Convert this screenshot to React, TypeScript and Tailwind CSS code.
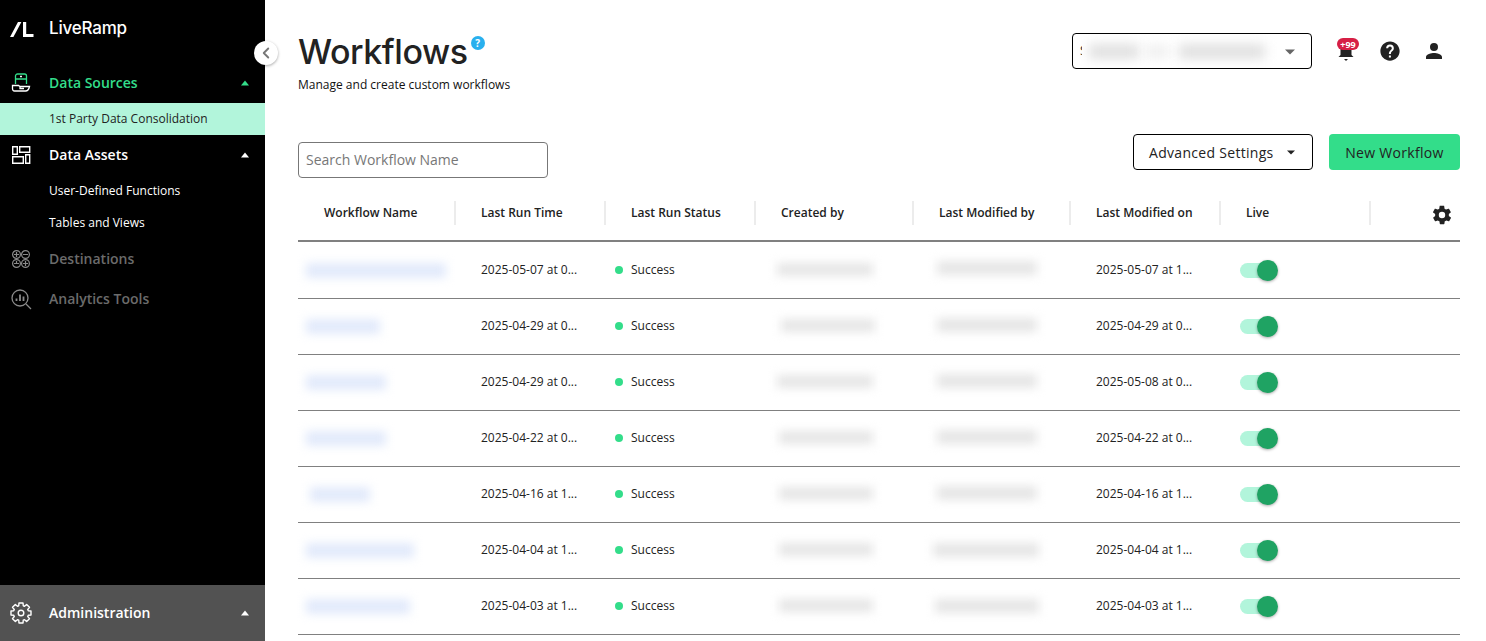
import { ChevronLeft } from 'lucide-react';

const rows = [
    { run: '2025-05-07 at 0...', mod: '2025-05-07 at 1...', name: 'w-[140px] ml-[8px]', by: 'w-[96px] ml-[23px]', last: 'w-[100px] ml-[25px] -mt-[4px]' },
    { run: '2025-04-29 at 0...', mod: '2025-04-29 at 0...', name: 'w-[74px] ml-[8px]', by: 'w-[94px] ml-[27px]', last: 'w-[100px] ml-[25px] -mt-[2px]' },
    { run: '2025-04-29 at 0...', mod: '2025-05-08 at 0...', name: 'w-[80px] ml-[8px]', by: 'w-[96px] ml-[23px]', last: 'w-[100px] ml-[25px] -mt-[2px]' },
    { run: '2025-04-22 at 0...', mod: '2025-04-22 at 0...', name: 'w-[80px] ml-[8px]', by: 'w-[94px] ml-[25px]', last: 'w-[100px] ml-[25px] -mt-[2px]' },
    { run: '2025-04-16 at 1...', mod: '2025-04-16 at 1...', name: 'w-[60px] ml-[12px]', by: 'w-[94px] ml-[25px]', last: 'w-[100px] ml-[25px] -mt-[2px]' },
    { run: '2025-04-04 at 1...', mod: '2025-04-04 at 1...', name: 'w-[108px] ml-[8px]', by: 'w-[94px] ml-[25px]', last: 'w-[106px] ml-[21px]' },
    { run: '2025-04-03 at 1...', mod: '2025-04-03 at 1...', name: 'w-[104px] ml-[8px]', by: 'w-[94px] ml-[25px]', last: 'w-[104px] ml-[23px]' },
];

const columns = 'grid grid-cols-[156px_150px_150px_158px_157px_150px_150px_91px]';

// eight square teeth around a ring
const cogPath = Array.from({ length: 8 }, (_, i) => {
    const a = (i * Math.PI) / 4;
    const pt = (r: number, d: number) => `${(11 + r * Math.sin(a + d)).toFixed(2)} ${(11 - r * Math.cos(a + d)).toFixed(2)}`;
    return `${i === 0 ? 'M' : 'L'}${pt(7.6, -0.3)} L${pt(10.2, -0.2)} L${pt(10.2, 0.2)} L${pt(7.6, 0.3)}`;
}).join(' ') + ' Z';

function Caret() {
    return (
        <svg width="10" height="6" viewBox="0 0 10 6">
            <path d="M5 0.5 9 5.5H1Z" fill="currentColor" />
        </svg>
    );
}

function NavHeader({ label, className, caret, icon }: { label: string; className: string; caret?: boolean; icon: React.ReactNode }) {
    return (
        <div className={`flex h-10 items-center pl-[10px] pr-[15px] ${className}`}>
            <div className="flex w-[39px] shrink-0">{icon}</div>
            <span className="-mt-[2px] flex-1 text-[14px] font-semibold">{label}</span>
            {caret && <Caret />}
        </div>
    );
}

function TableHeader({ label, first }: { label: string; first?: boolean }) {
    return (
        <div className={`flex h-[24px] items-center text-[12px] font-semibold text-[#222] ${first ? 'pl-[26px]' : 'border-l-2 border-[#ececec] pl-[25px]'}`}>
            {label}
        </div>
    );
}

function Toggle() {
    return (
        <div className="ml-[21px] mt-[2px] flex h-[20px] w-[38px] items-center">
            <div className="relative h-[15px] w-[36px] rounded-full bg-[#b2f5db]">
                <div className="absolute -right-[2px] -top-[3px] h-[21px] w-[21px] rounded-full bg-[#1fa363] shadow-[0_1px_3px_rgba(0,0,0,0.35)]" />
            </div>
        </div>
    );
}

export default function App() {
    return (
        <div className="flex h-screen overflow-hidden bg-white font-['Open_Sans',sans-serif] text-[#222]">
            <aside className="relative flex w-[265px] shrink-0 flex-col bg-black text-white">
                <div className="flex h-[63px] items-start pl-[10px] pt-[17px]">
                    <svg width="24" height="22" viewBox="0 0 24 22" className="mr-[15px]">
                        <path d="M0 20 8 5h3.400L3.400 20Z" fill="#fff" />
                        <path d="M13 5h3.200v12H23.500v3H13Z" fill="#fff" />
                    </svg>
                    <span className="font-['Inter',sans-serif] text-[17px] font-medium leading-[22px] tracking-[-0.2px]">LiveRamp</span>
                </div>

                <NavHeader
                    label="Data Sources"
                    className="text-[#33dd8a]"
                    caret
                    icon={
                        <svg width="22" height="22" viewBox="0 0 22 22" fill="none" strokeWidth="1.300">
                            <path d="M5.500 12V4a2 2 0 0 1 2-2h7a2 2 0 0 1 2 2v8M5.500 7h11" stroke="#33dd8a" />
                            <path d="M10 4.500h2" stroke="#fff" />
                            <path d="M2.500 13.500h6l1.500 1h9.500c-.5 2.500-2 4.500-4 4.500H4.500c-1.300 0-2-1-2-2.500ZM10 14.500v2h4" stroke="#fff" />
                        </svg>
                    }
                />
                <div className="flex h-8 items-center bg-[#b2f5db] pl-[49px] text-[12px] text-[#222]">1st Party Data Consolidation</div>

                <NavHeader
                    label="Data Assets"
                    caret
                    icon={
                        <svg width="22" height="22" viewBox="0 0 22 22" fill="none" stroke="#fff" strokeWidth="1.400">
                            <path d="M2.700 2.700h4.600v7.600H2.700Z" />
                            <path d="M9.700 2.700h10v5.600h-10Z" />
                            <path d="M2.700 12.700h10.600v6.600H2.700Z" />
                            <path d="M15.700 10.700h4v8.600h-4Z" />
                        </svg>
                    }
                />
                <div className="flex h-8 items-center pl-[49px] text-[12px]">User-Defined Functions</div>
                <div className="flex h-8 items-center pl-[49px] text-[12px]">Tables and Views</div>

                <NavHeader
                    label="Destinations"
                    className="text-[#6b6b6b]"
                    icon={
                        <svg width="22" height="22" viewBox="0 0 22 22" fill="none" stroke="#8a8a8a" strokeWidth="1.200">
                            <circle cx="6.500" cy="6.500" r="3.900" />
                            <circle cx="15.500" cy="6.500" r="3.900" />
                            <circle cx="6.500" cy="15.500" r="3.900" />
                            <circle cx="15.500" cy="15.500" r="3.900" />
                            <path d="M6.500 4v5M4 6.500h5M13 6.500h5M15.500 13v5M6.500 13v3M4 15.500h5M13 15.500h5" />
                        </svg>
                    }
                />
                <NavHeader
                    label="Analytics Tools"
                    className="text-[#6b6b6b]"
                    icon={
                        <svg width="22" height="22" viewBox="0 0 22 22" fill="none" stroke="#8a8a8a" strokeWidth="1.300">
                            <circle cx="10" cy="10" r="8" />
                            <path d="M6.500 13v-2.500M10 13V6.500M13.500 13V8.500" strokeWidth="1.800" />
                            <path d="M16 16l5 5" />
                        </svg>
                    }
                />

                <div className="mt-auto flex h-[56px] items-center bg-[#525252] pl-[10px] pr-[15px]">
                    <div className="flex w-[39px] shrink-0">
                        <svg width="22" height="22" viewBox="0 0 22 22" fill="none" stroke="#fff" strokeWidth="1.400" strokeLinejoin="round">
                            <path d={cogPath} />
                            <circle cx="11" cy="11" r="2.800" />
                        </svg>
                    </div>
                    <span className="-mt-[2px] flex-1 text-[14px] font-semibold">Administration</span>
                    <Caret />
                </div>

                <button className="absolute left-[254px] top-[41px] flex h-6 w-6 items-center justify-center rounded-full bg-white shadow-[0_1px_3px_rgba(0,0,0,0.35)]">
                    <ChevronLeft size={18} strokeWidth={2.500} className="text-[#777]" />
                </button>
            </aside>

            <main className="flex min-w-0 flex-1 flex-col pl-[33px] pr-[26px]">
                <header className="flex h-[134px] shrink-0 items-start justify-between pt-[33px]">
                    <div>
                        <div className="flex items-start">
                            <h1 className="font-['Inter',sans-serif] text-[34px] font-medium leading-[38px] tracking-[-0.45px] text-[#222]">Workflows</h1>
                            <div className="ml-[3px] mt-[3px] flex h-[14px] w-[14px] items-center justify-center rounded-full bg-[#29b0ee] text-[10px] font-bold leading-none text-white">?</div>
                        </div>
                        <p className="mt-[5px] text-[12px] leading-[18px] text-[#111]">Manage and create custom workflows</p>
                    </div>
                    <div className="flex items-center">
                        <div className="relative flex h-9 w-[240px] items-center overflow-hidden rounded-[4px] border border-black pl-[7px]">
                            <span className="text-[13px]">S</span>
                            <div className="absolute left-[9px] top-[7px] h-[22px] w-[194px] bg-white" />
                            <div className="absolute left-[16px] top-[10px] h-[15px] w-[50px] bg-[#e0e0e0] blur-[6px]" />
                            <div className="absolute left-[72px] top-[11px] h-[13px] w-[24px] bg-[#efefef] blur-[6px]" />
                            <div className="absolute left-[106px] top-[10px] h-[15px] w-[86px] bg-[#e0e0e0] blur-[6px]" />
                            <svg width="12" height="6" viewBox="0 0 12 6" className="absolute right-[15px] top-[15px]">
                                <path d="M1 .5h10L6 5.500Z" fill="#666" />
                            </svg>
                        </div>
                        <div className="relative ml-[22px] flex h-6 w-6 items-center justify-center">
                            <svg width="18" height="22" viewBox="0 0 18 22" className="mt-[1px]">
                                <path d="M9 2c3.500 0 5.500 2.500 5.500 6v6l2 2H1.500l2-2V8C3.500 4.500 5.500 2 9 2ZM7 18h4l-2 2Z" fill="#222" />
                            </svg>
                            <div className="absolute -top-px left-[3px] flex h-3 w-[22px] items-center justify-center rounded-full bg-[#d61f45] text-[9px] font-bold leading-none text-white">+99</div>
                        </div>
                        <svg width="22" height="22" viewBox="0 0 24 24" className="ml-[21px]">
                            <path d="M12 1.500C6.200 1.500 1.500 6.200 1.500 12S6.200 22.500 12 22.500 22.500 17.800 22.500 12 17.800 1.500 12 1.500Zm1 17.500h-2.200v-2.200H13Zm2.300-7.600-1 1c-.8.800-1.300 1.400-1.300 3h-2.200v-.6c0-1.200.5-2.200 1.300-3l1.300-1.400c.4-.4.600-.9.600-1.400a2 2 0 0 0-4 0H7.800a4.200 4.200 0 0 1 8.400 0c0 .9-.4 1.800-.9 2.400Z" fill="#222" />
                        </svg>
                        <svg width="24" height="24" viewBox="0 0 24 24" className="ml-[21px] mr-[14px]">
                            <path d="M12 12a4 4 0 1 0 0-8 4 4 0 0 0 0 8Zm0 2c-2.700 0-8 1.300-8 4v2h16v-2c0-2.700-5.300-4-8-4Z" fill="#222" />
                        </svg>
                    </div>
                </header>

                <div className="flex shrink-0 items-start justify-between">
                    <div className="mt-2 flex h-9 w-[250px] items-center rounded-[4px] border border-[#777] pb-[2px] pl-[7px] text-[14px] text-[#777]">Search Workflow Name</div>
                    <div className="flex items-center gap-4">
                        <div className="flex h-9 w-[180px] items-center rounded-[4px] border border-black pl-[15px] text-[14px] font-medium tracking-[0.3px] text-[#222]">
                            Advanced Settings
                            <svg width="8" height="5" viewBox="0 0 8 5" className="ml-[13px]">
                                <path d="M0 .5h8L4 4.500Z" fill="#222" />
                            </svg>
                        </div>
                        <div className="flex h-9 w-[131px] items-center justify-center rounded-[4px] bg-[#33dd8a] text-[14px] font-medium tracking-[0.3px] text-[#222]">New Workflow</div>
                    </div>
                </div>

                <div className={`${columns} mt-[23px] h-[41px] shrink-0 items-start border-b-2 border-[#808080]`}>
                    <TableHeader label="Workflow Name" first />
                    <TableHeader label="Last Run Time" />
                    <TableHeader label="Last Run Status" />
                    <TableHeader label="Created by" />
                    <TableHeader label="Last Modified by" />
                    <TableHeader label="Last Modified on" />
                    <TableHeader label="Live" />
                    <div className="flex h-[24px] items-center justify-end border-l-2 border-[#ececec] pr-[7px]">
                        <svg width="22" height="22" viewBox="0 0 24 24" className="mt-[4px]">
                            <path d="M19.400 13c.1-.3.1-.7.1-1s0-.7-.1-1l2.100-1.600c.2-.2.2-.4.1-.6l-2-3.500c-.1-.2-.4-.3-.6-.2l-2.500 1a7.400 7.400 0 0 0-1.700-1l-.4-2.700c0-.2-.2-.4-.5-.4h-4c-.3 0-.5.200-.5.400l-.4 2.700c-.6.200-1.200.6-1.700 1l-2.500-1c-.2-.1-.5 0-.6.200l-2 3.500c-.1.200-.1.400.1.600L4.600 11c-.1.300-.1.700-.1 1s0 .7.1 1l-2.100 1.600c-.2.200-.2.400-.1.600l2 3.500c.1.200.4.300.6.200l2.500-1c.5.400 1.100.8 1.700 1l.4 2.700c0 .2.200.4.500.4h4c.3 0 .5-.2.500-.4l.4-2.700c.6-.2 1.200-.6 1.700-1l2.500 1c.2.100.5 0 .6-.2l2-3.500c.1-.2.100-.4-.1-.6ZM12 15.500a3.500 3.500 0 1 1 0-7 3.500 3.500 0 0 1 0 7Z" fill="#222" />
                        </svg>
                    </div>
                </div>

                <div className="mt-px shrink-0">
                    {rows.map((row, i) => (
                        <div key={i} className={`${columns} h-[56px] items-center border-b border-[#808080] pb-[2px] text-[12px] text-[#222]`}>
                            <div className={`${row.name} mt-[2px] h-[15px] bg-[#e2eafb] blur-[5px]`} />
                            <div className="pl-[27px]">{row.run}</div>
                            <div className="flex items-center pl-[11px]">
                                <span className="mr-[8px] h-2 w-2 rounded-full bg-[#33dd8a]" />
                                Success
                            </div>
                            <div className={`${row.by} h-[13px] bg-[#e6e6e6] blur-[5px]`} />
                            <div className={`${row.last} h-[14px] bg-[#e6e6e6] blur-[5px]`} />
                            <div className="pl-[27px]">{row.mod}</div>
                            <Toggle />
                            <div />
                        </div>
                    ))}
                </div>
            </main>
        </div>
    );
}
